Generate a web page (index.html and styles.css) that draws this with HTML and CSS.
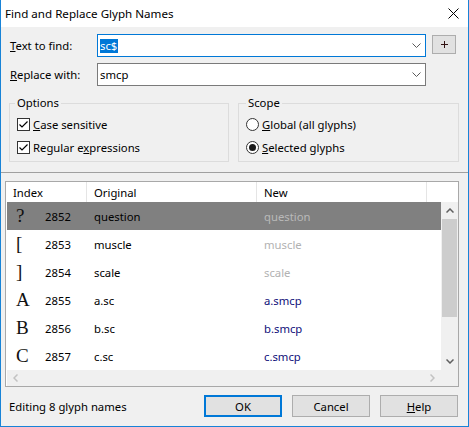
FILE: index.html
```
<!DOCTYPE html>
<html>
<head>
<meta charset="utf-8">
<link rel="stylesheet" href="styles.css">
</head>
<body>
<div class="window">
  <div class="titlebar">
    <span class="title">Find and Replace Glyph Names</span>
    <svg class="close" width="11" height="11" viewBox="0 0 11 11"><path d="M0.5 0.5 L10.5 10.5 M10.5 0.5 L0.5 10.5" stroke="#000" stroke-width="1" fill="none"/></svg>
  </div>
  <div class="content">
    <div class="top">
      <div class="field-row">
        <span class="lbl"><u>T</u>ext to find:</span>
        <div class="combo focus"><span class="val"><span class="sel">sc$</span></span><svg class="chev" width="9" height="5" viewBox="0 0 9 5"><polyline points="0.5,0.5 4.5,4.5 8.5,0.5" stroke="#5a5a5a" stroke-width="1" fill="none"/></svg></div>
        <div class="plus"><svg width="7" height="7" viewBox="0 0 7 7"><path d="M3.5 0 V7 M0 3.5 H7" stroke="#301010" stroke-width="1" fill="none"/></svg></div>
      </div>
      <div class="field-row">
        <span class="lbl"><u>R</u>eplace with:</span>
        <div class="combo"><span class="val">smcp</span><svg class="chev" width="9" height="5" viewBox="0 0 9 5"><polyline points="0.5,0.5 4.5,4.5 8.5,0.5" stroke="#5a5a5a" stroke-width="1" fill="none"/></svg></div>
      </div>
      <div class="groups">
        <fieldset class="group options">
          <legend>Options</legend>
          <div class="opt"><span class="box"><svg width="11" height="11" viewBox="0 0 11 11"><polyline points="1.5,5.5 4,8 9.5,2.5" stroke="#000" stroke-width="1.2" fill="none"/></svg></span><span><u>C</u>ase sensitive</span></div>
          <div class="opt"><span class="box"><svg width="11" height="11" viewBox="0 0 11 11"><polyline points="1.5,5.5 4,8 9.5,2.5" stroke="#000" stroke-width="1.2" fill="none"/></svg></span><span>Regular e<u>x</u>pressions</span></div>
        </fieldset>
        <fieldset class="group scope">
          <legend>Scope</legend>
          <div class="opt"><span class="radio"></span><span><u>G</u>lobal (all glyphs)</span></div>
          <div class="opt"><span class="radio on"><span class="dot"></span></span><span><u>S</u>elected glyphs</span></div>
        </fieldset>
      </div>
    </div>
    <div class="sep"></div>
    <div class="bottom">
      <div class="list">
        <div class="lhead">
          <div class="hcell c1">Index</div>
          <div class="hcell c2">Original</div>
          <div class="hcell c3">New</div>
        </div>
        <div class="lbody">
          <div class="rows">
            <div class="row selected"><span class="g">?</span><span>2852</span><span>question</span><span class="same">question</span></div>
            <div class="row"><span class="g">[</span><span>2853</span><span>muscle</span><span class="same">muscle</span></div>
            <div class="row"><span class="g">]</span><span>2854</span><span>scale</span><span class="same">scale</span></div>
            <div class="row"><span class="g">A</span><span>2855</span><span>a.sc</span><span class="chg">a.smcp</span></div>
            <div class="row"><span class="g">B</span><span>2856</span><span>b.sc</span><span class="chg">b.smcp</span></div>
            <div class="row"><span class="g">C</span><span>2857</span><span>c.sc</span><span class="chg">c.smcp</span></div>
          </div>
          <div class="vscroll">
            <div class="sbtn"><svg width="8" height="5" viewBox="0 0 8 5"><polyline points="0.5,4.5 4,1 7.5,4.5" stroke="#606060" stroke-width="1.5" fill="none"/></svg></div>
            <div class="thumb"></div>
            <div class="track"></div>
            <div class="sbtn"><svg width="8" height="5" viewBox="0 0 8 5"><polyline points="0.5,0.5 4,4 7.5,0.5" stroke="#606060" stroke-width="1.5" fill="none"/></svg></div>
          </div>
        </div>
        <div class="hrow">
          <div class="hscroll">
            <div class="hbtn"><svg width="5" height="8" viewBox="0 0 5 8"><polyline points="4.5,0.5 1,4 4.5,7.5" stroke="#c2c2c2" stroke-width="1.5" fill="none"/></svg></div>
            <div class="hbtn"><svg width="5" height="8" viewBox="0 0 5 8"><polyline points="0.5,0.5 4,4 0.5,7.5" stroke="#c2c2c2" stroke-width="1.5" fill="none"/></svg></div>
          </div>
          <div class="corner"></div>
        </div>
      </div>
      <div class="footer">
        <span class="status">Editing 8 glyph names</span>
        <button class="btn default">OK</button>
        <button class="btn">Cancel</button>
        <button class="btn"><u>H</u>elp</button>
      </div>
    </div>
  </div>
</div>
</body>
</html>
```
FILE: styles.css
```
* { box-sizing: border-box; }
body {
  margin: 0;
  font-family: "Noto Sans", "Segoe UI", sans-serif;
  font-size: 11.3px;
  color: #000;
}
u { text-underline-offset: 1px; }
.window {
  width: 469px;
  height: 427px;
  border: 1px solid #1883d7;
  border-top: none;
  background: #f0f0f0;
  display: flex;
  flex-direction: column;
}
.titlebar {
  height: 27px;
  flex: none;
  background: #fff;
  display: flex;
  align-items: center;
  padding-left: 4px;
}
.title { flex: 1; line-height: 27px; font-size: 11.6px; }
.close { margin-right: 9px; }
.content { flex: 1; display: flex; flex-direction: column; }
.top { padding-top: 7px; }
.field-row { display: flex; align-items: flex-start; height: 23px; }
.field-row + .field-row { margin-top: 6px; }
.lbl { width: 96px; padding-left: 9px; line-height: 23px; }
.combo {
  width: 329px;
  height: 23px;
  border: 1px solid #7a7a7a;
  background: #fff;
  display: flex;
  align-items: center;
  padding-left: 2px;
}
.combo.focus { border-color: #0078d7; }
.val { flex: 1; line-height: 14px; }
.sel { background: #0078d7; color: #fff; display: inline-block; line-height: 14px; padding-right: 1px; }
.chev { margin-right: 4px; }
.plus {
  margin-left: 6px;
  margin-top: 1px;
  width: 24px;
  height: 19px;
  border: 1px solid #adadad;
  background: #e1e1e1;
  display: flex;
  align-items: center;
  justify-content: center;
}
.groups { display: flex; gap: 9px; padding-left: 8px; margin-top: 9px; }
.group {
  margin: 0;
  border: 1px solid #dcdcdc;
  padding: 2px 7px 3px 7px;
  min-inline-size: 0;
}
.options { width: 220px; }
.scope { width: 221px; }
legend { padding: 0 2px; margin-left: -2px; line-height: 16px; }
.scope legend { margin-left: 0; }
.opt { display: flex; align-items: center; height: 22px; }
.opt + .opt { margin-top: 1px; }
.box {
  width: 13px;
  height: 13px;
  border: 1px solid #333;
  background: #fff;
  margin-right: 3px;
  display: flex;
}
.radio {
  width: 13px;
  height: 13px;
  border: 1px solid #333;
  border-radius: 50%;
  background: #fff;
  margin-right: 3px;
  display: flex;
  align-items: center;
  justify-content: center;
}
.dot { width: 7px; height: 7px; border-radius: 50%; background: #1a1a1a; }
.sep { margin-top: 10px; height: 1px; background: #a0a0a0; flex: none; }
.bottom { padding: 8px 10px 0 4px; }
.list {
  width: 454px;
  height: 206px;
  border: 1px solid #a8a8a8;
  background: #fff;
  padding-left: 1px;
  display: flex;
  flex-direction: column;
}
.lhead { height: 20px; display: flex; flex: none; }
.hcell { border-right: 1px solid #e5e5e5; padding-left: 6px; padding-top: 2px; line-height: 18px; }
.c1 { width: 80px; }
.c2 { width: 170px; padding-left: 7px; }
.c3 { width: 170px; padding-left: 7px; }
.lbody { display: flex; height: 168px; flex: none; }
.rows { width: 434px; }
.row {
  height: 28px;
  display: grid;
  grid-template-columns: 38px 49px 170px 1fr;
  align-items: center;
}
.row.selected { background: #808080; }
.g { padding-left: 9px; font-family: "Liberation Serif", serif; font-size: 19px; line-height: 28px; color: #111; }
.same { color: #b2b2b2; }
.row.selected .same { color: #b9b9b9; }
.chg { color: #10107a; }
.vscroll { width: 17px; background: #f0f0f0; display: flex; flex-direction: column; }
.sbtn { height: 17px; display: flex; align-items: center; justify-content: center; flex: none; }
.thumb { height: 98px; margin: 0 1px; background: #cdcdcd; flex: none; }
.track { flex: 1; }
.hrow { display: flex; height: 16px; flex: none; }
.hscroll { width: 434px; background: #f0f0f0; display: flex; justify-content: space-between; }
.hbtn { width: 17px; display: flex; align-items: center; justify-content: center; }
.corner { width: 17px; background: #f0f0f0; }
.footer { display: flex; align-items: center; margin-top: 8px; height: 22px; }
.status { flex: 1; padding-left: 4px; }
.btn {
  width: 78px;
  height: 22px;
  margin-left: 10px;
  border: 1px solid #adadad;
  background: #e1e1e1;
  font-family: "Noto Sans", "Segoe UI", sans-serif;
  font-size: 11.3px;
  color: #000;
  padding: 0;
}
.btn.default { border: 2px solid #0078d7; }
```
